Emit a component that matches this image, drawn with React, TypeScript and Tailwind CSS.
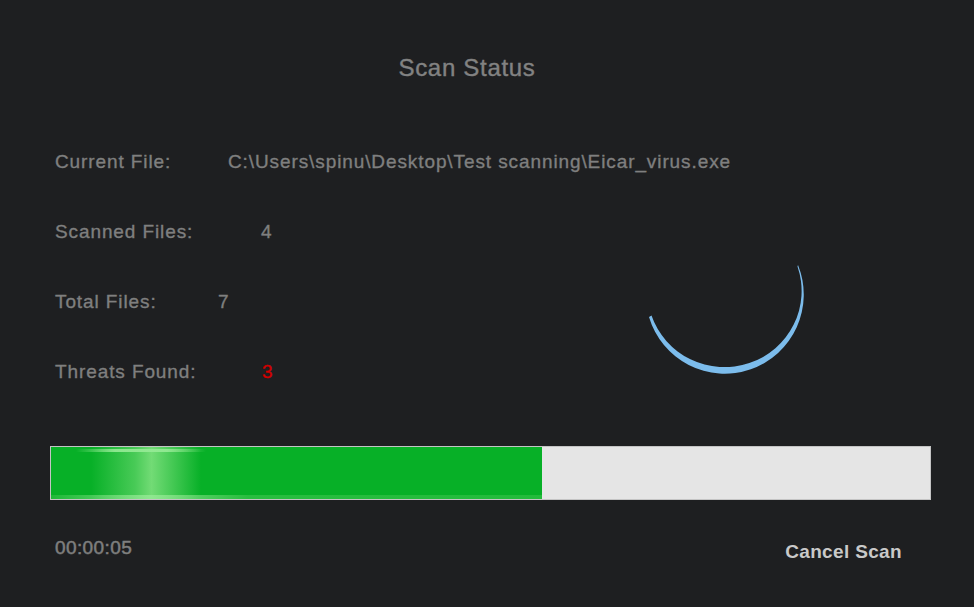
import React from "react";

const font = { fontFamily: '"Liberation Sans", Arial, sans-serif' };

function Spinner() {
  const sx = 159, sy = 11;
  const ex = 10, ey = 63;
  return (
    <svg width="172" height="124" viewBox="0 0 172 124" className="shrink-0">
      <path
        d={`M ${sx} ${sy} A 79 79 0 1 1 ${ex} ${ey} L 12.5 61.5 A 75 74 0 1 0 ${sx - 0.5} ${sy + 1.5} Z`}
        fill="#7cbcec"
      />
    </svg>
  );
}

function Row({ label, value, w, red }: { label: string; value: string; w: string; red?: boolean }) {
  return (
    <div className="flex h-6 items-center text-[19px] leading-6 tracking-[0.9px] whitespace-nowrap [-webkit-text-stroke:0.35px_currentColor]">
      <span className={`${w} shrink-0 text-[#7f7f7f]`}>{label}</span>
      <span className={red ? "text-[#d20000]" : "text-[#7f7f7f]"}>{value}</span>
    </div>
  );
}

export default function App() {
  return (
    <div className="w-[974px] h-[607px] bg-[#1e1f21] overflow-hidden" style={font}>
      <div className="w-[934px] pt-[54px] text-center text-[24px] leading-7 tracking-[0.7px] text-[#828282] [-webkit-text-stroke:0.4px_currentColor]">
        Scan Status
      </div>
      <div className="flex">
        <div className="flex flex-col gap-[46px] pl-[55px] pt-[68px] w-[639px] shrink-0">
          <Row label="Current File:" value="C:\Users\spinu\Desktop\Test scanning\Eicar_virus.exe" w="w-[173px]" />
          <Row label="Scanned Files:" value="4" w="w-[206px]" />
          <Row label="Total Files:" value="7" w="w-[163px]" />
          <Row label="Threats Found:" value="3" w="w-[207px]" red />
        </div>
        <div className="pt-[172px]">
          <Spinner />
        </div>
      </div>
      <div className="ml-[50px] mt-[62px] w-[881px] h-[54px] border border-[#c4c4c4] bg-[#e5e5e5] flex">
        <div className="relative w-[491px] h-full bg-[#07b027] overflow-hidden">
          <div className="absolute left-[40px] top-0 h-full w-[110px] bg-[linear-gradient(90deg,rgba(126,224,126,0)_0%,rgba(126,224,126,0.55)_40%,rgba(126,224,126,0.9)_55%,rgba(126,224,126,0.5)_75%,rgba(126,224,126,0)_100%)]" />
          <div className="absolute left-[25px] top-[2px] h-[3px] w-[130px] bg-[linear-gradient(90deg,rgba(150,235,150,0)_0%,rgba(150,235,150,0.9)_30%,rgba(150,235,150,0.9)_70%,rgba(150,235,150,0)_100%)]" />
          <div className="absolute left-0 bottom-0 h-[4px] w-full bg-[linear-gradient(90deg,rgba(120,220,120,0.2)_0%,rgba(150,235,150,0.8)_20%,rgba(120,220,120,0.3)_40%,rgba(120,220,120,0.25)_100%)]" />
        </div>
      </div>
      <div className="flex justify-between items-start pl-[55px] pr-[72px]">
        <div className="mt-[37px] text-[19px] leading-[22px] tracking-[0.4px] text-[#7f7f7f] [-webkit-text-stroke:0.5px_currentColor]">00:00:05</div>
        <div className="mt-[41px] text-[19px] leading-[22px] font-bold tracking-[0.35px] text-[#c9c9c9]">Cancel Scan</div>
      </div>
    </div>
  );
}
